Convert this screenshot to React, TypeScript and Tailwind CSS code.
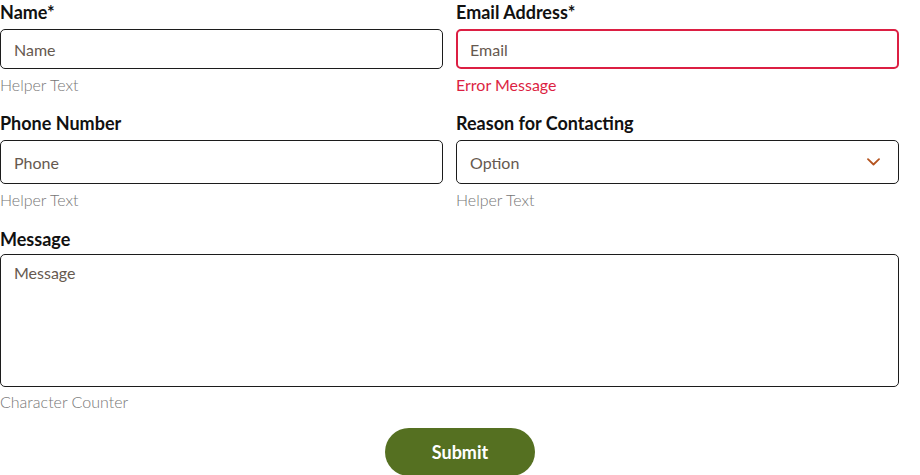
import React from "react";

function Label({ children }: { children: React.ReactNode }) {
  return (
    <label className="block h-6 text-[18px] leading-6 font-bold text-[#111]">
      {children}
    </label>
  );
}

function Helper({ children, error }: { children: React.ReactNode; error?: boolean }) {
  return (
    <p
      className={`mt-1 text-base leading-6 ${
        error ? "text-[#dc1f43] font-normal" : "text-[#767676] font-light"
      }`}
    >
      {children}
    </p>
  );
}

export default function App() {
  return (
    <div
      className="w-full bg-white"
      style={{ fontFamily: "Lato, 'Liberation Sans', sans-serif" }}
    >
      <div className="w-[899px] grid grid-cols-2 gap-x-[13px]">
        {/* Row 1 */}
        <div>
          <Label>Name*</Label>
          <input
            placeholder="Name"
            className="mt-[5px] block w-full h-10 px-[13px] border border-[#1c1c1c] rounded-[5px] text-base text-[#333] placeholder:text-[#66594f] outline-none"
          />
          <Helper>Helper Text</Helper>
        </div>
        <div>
          <Label>Email Address*</Label>
          <input
            placeholder="Email"
            className="mt-[5px] block w-full h-10 px-[12px] border-2 border-[#dc1f43] rounded-[5px] text-base text-[#333] placeholder:text-[#66594f] outline-none"
          />
          <Helper error>Error Message</Helper>
        </div>

        {/* Row 2 */}
        <div className="mt-[14px]">
          <Label>Phone Number</Label>
          <input
            placeholder="Phone"
            className="mt-[5px] block w-full h-11 px-[13px] border border-[#1c1c1c] rounded-[5px] text-base text-[#333] placeholder:text-[#66594f] outline-none"
          />
          <Helper>Helper Text</Helper>
        </div>
        <div className="mt-[14px]">
          <Label>Reason for Contacting</Label>
          <div className="mt-[5px] flex items-center justify-between w-full h-11 pl-[13px] pr-[18px] border border-[#1c1c1c] rounded-[5px] text-base text-[#66594f]">
            <span className="pt-px">Option</span>
            <svg width="13" height="8" viewBox="0 0 13 8" fill="none">
              <path
                d="M1 1.2l5.5 5.3 5.5-5.3"
                stroke="#b5541f"
                strokeWidth="1.8"
                strokeLinecap="round"
                strokeLinejoin="round"
              />
            </svg>
          </div>
          <Helper>Helper Text</Helper>
        </div>

        {/* Message */}
        <div className="col-span-2 mt-[15px]">
          <Label>Message</Label>
          <textarea
            placeholder="Message"
            className="mt-[3px] block w-full h-[133px] px-[13px] py-[6px] resize-none border border-[#1c1c1c] rounded-[5px] text-base text-[#333] placeholder:text-[#66594f] outline-none"
          />
          <p className="mt-[3px] text-base leading-6 text-[#767676] font-light">
            Character Counter
          </p>
        </div>
      </div>

      <div className="mt-[14px] flex justify-center">
        <button className="w-[150px] h-12 rounded-full bg-[#557021] text-white text-[18px] font-bold">
          Submit
        </button>
      </div>
    </div>
  );
}
